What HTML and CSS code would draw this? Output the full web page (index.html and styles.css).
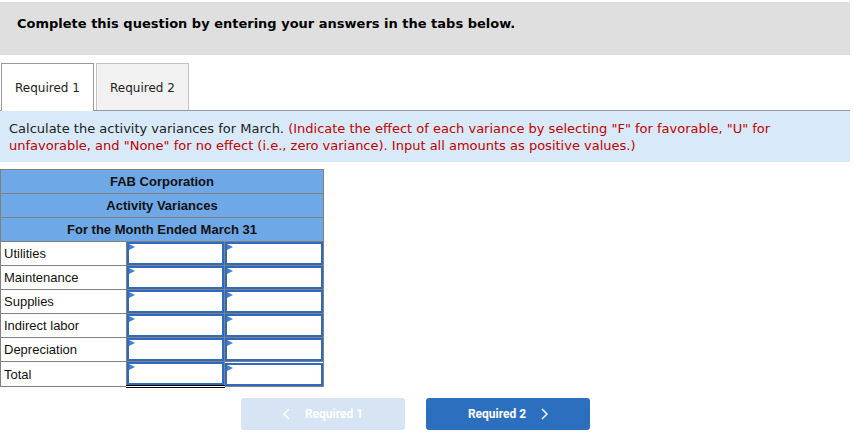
FILE: index.html
```html
<!DOCTYPE html>
<html>
<head>
<meta charset="utf-8">
<link rel="stylesheet" href="styles.css">
</head>
<body>
<div class="page">
  <div class="banner"><p>Complete this question by entering your answers in the tabs below.</p></div>
  <div class="tabs">
    <div class="tab active">Required 1</div>
    <div class="tab">Required 2</div>
  </div>
  <div class="instructions">Calculate the activity variances for March. <span class="red">(Indicate the effect of each variance by selecting "F" for favorable, "U" for</span><br><span class="red">unfavorable, and "None" for no effect (i.e., zero variance). Input all amounts as positive values.)</span></div>
  <table class="sheet">
    <colgroup><col class="c-label"><col class="c-amt"><col class="c-amt2"></colgroup>
    <tr class="head"><td colspan="3">FAB Corporation</td></tr>
    <tr class="head"><td colspan="3">Activity Variances</td></tr>
    <tr class="head"><td colspan="3">For the Month Ended March 31</td></tr>
    <tr><td class="label">Utilities</td><td class="cell"><div class="inp"></div></td><td class="cell"><div class="inp"></div></td></tr>
    <tr><td class="label">Maintenance</td><td class="cell"><div class="inp"></div></td><td class="cell"><div class="inp"></div></td></tr>
    <tr><td class="label">Supplies</td><td class="cell"><div class="inp"></div></td><td class="cell"><div class="inp"></div></td></tr>
    <tr><td class="label">Indirect labor</td><td class="cell"><div class="inp"></div></td><td class="cell"><div class="inp"></div></td></tr>
    <tr><td class="label">Depreciation</td><td class="cell"><div class="inp"></div></td><td class="cell"><div class="inp"></div></td></tr>
    <tr class="total"><td class="label">Total</td><td class="cell sum"><div class="inp"></div></td><td class="cell"><div class="inp"></div></td></tr>
  </table>
  <div class="nav">
    <button class="btn prev"><svg width="7" height="12" viewBox="0 0 7 12"><path d="M6 1 L1 6 L6 11" fill="none" stroke="#fff" stroke-width="1.5"/></svg><span>Required 1</span></button>
    <button class="btn next"><span>Required 2</span><svg width="7" height="12" viewBox="0 0 7 12"><path d="M1 1 L6 6 L1 11" fill="none" stroke="#fff" stroke-width="1.5"/></svg></button>
  </div>
</div>
</body>
</html>
```

FILE: styles.css
```css
html, body { margin: 0; padding: 0; background: #fff; }
.page { width: 850px; padding-top: 2px; font-family: "DejaVu Sans", Verdana, sans-serif; }
.banner { background: #dfdfdf; height: 53px; box-sizing: border-box; padding: 14px 0 0 17px; }
.banner p { margin: 0; font-size: 13px; font-weight: bold; color: #000; line-height: 16px; }
.tabs { margin-top: 8px; height: 47px; border-bottom: 1px solid #9a9a9a; display: flex; align-items: flex-start; padding-left: 1px; gap: 2px; }
.tab { width: 93px; height: 47px; box-sizing: border-box; border: 1px solid #c3c3c3; border-bottom: none; background: #f2f2f2; font-size: 12px; color: #222; display: flex; align-items: center; justify-content: center; padding-top: 1px; }
.tab.active { background: #fff; border-color: #9a9a9a; height: 48px; position: relative; z-index: 1; padding-top: 0; }
.instructions { background: #d8eaf9; padding: 9px 9px 8px; font-size: 13px; line-height: 17px; color: #222; white-space: nowrap; }
.red { color: #c00000; }
.sheet { margin-top: 7px; border-collapse: collapse; table-layout: fixed; width: 323px; font-family: "Liberation Sans", Arial, sans-serif; font-size: 13px; color: #111; }
.c-label { width: 126px; }
.c-amt { width: 98px; }
.c-amt2 { width: 99px; }
.sheet td { border: 1px solid #808080; padding: 0; height: 23px; box-sizing: border-box; }
.head td { background: #6fa8e6; font-weight: bold; text-align: center; height: 24px; }
.label { padding: 0 0 0 3px !important; height: 24px !important; }
.inp { height: 19px; border: 2px solid #2f6abd; position: relative; background: #fff; }
.inp::before { content: ""; position: absolute; left: 0; top: 0; border-left: 6px solid #3f7fd6; border-top: 3.5px solid transparent; border-bottom: 3.5px solid transparent; }
.total .label { height: 25px !important; }
.sum { border-top: 1px solid #000 !important; border-bottom: 3px double #000 !important; }
.nav { display: flex; gap: 21px; padding-left: 241px; margin-top: 10px; }
.btn { width: 164px; height: 32px; border: none; border-radius: 3px; color: #fff; font-family: Roboto, "Helvetica Neue", sans-serif; font-weight: bold; font-size: 12px; display: flex; align-items: center; justify-content: center; gap: 15px; padding: 0; }
.prev { background: #d6e4f4; }
.next { background: #2d6fbf; }
```
